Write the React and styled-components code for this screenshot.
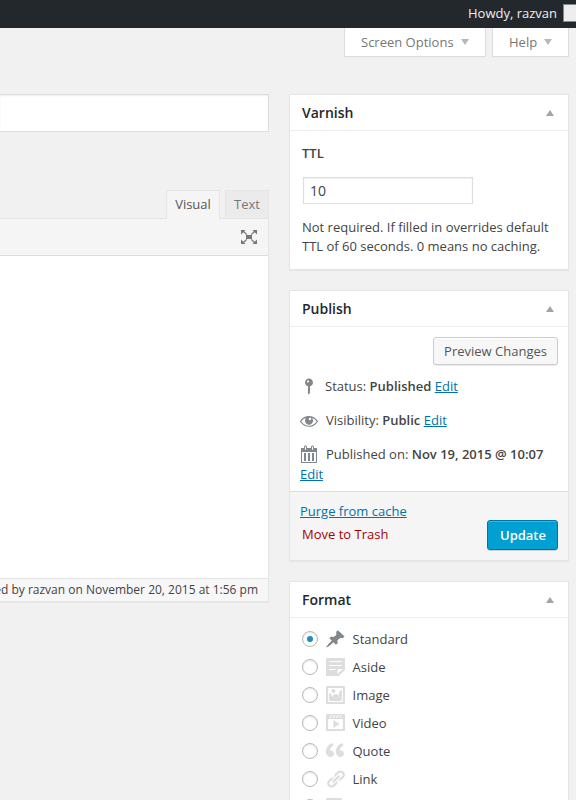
import React from "react";
import styled, { createGlobalStyle, css } from "styled-components";

const GlobalStyle = createGlobalStyle`
  *, *::before, *::after { box-sizing: border-box; }
  html, body { margin: 0; background: #f1f1f1; }
  body {
    font: 13px/19px "Open Sans", sans-serif;
    color: #444;
    overflow: hidden;
  }
`;

const Page = styled.div`
  width: 576px;
  height: 800px;
  overflow: hidden;
  display: flex;
  flex-direction: column;
  background: #f1f1f1;
`;

const AdminBar = styled.header`
  flex: none;
  height: 28px;
  background: #23282d;
  color: #eee;
  display: flex;
  justify-content: flex-end;
  align-items: center;
  line-height: 26px;
  padding-bottom: 3px;
`;

const Avatar = styled.span`
  width: 13px;
  height: 18px;
  margin-left: 6px;
  background: #eee;
  border: 1px solid #82878c;
  border-right: 0;
`;

const ScreenMeta = styled.nav`
  flex: none;
  display: flex;
  justify-content: flex-end;
  gap: 6px;
  padding-right: 7px;
  height: 66px;
`;

const MetaButton = styled.button`
  height: 29px;
  width: ${(p) => p.$width}px;
  padding: 1px 0 0 16px;
  background: #fff;
  border: 1px solid #ddd;
  border-top: 0;
  box-shadow: 0 1px 1px -1px rgba(0, 0, 0, 0.1);
  color: #777;
  font: inherit;
  display: flex;
  align-items: center;
`;

const Arrow = styled.span`
  width: 0;
  height: 0;
  border: solid transparent;
  ${(p) =>
    p.$up
      ? css`border-width: 0 4px 6px; border-bottom-color: #a0a5aa;`
      : css`border-width: 6px 4.5px 0; border-top-color: #b4b9be; margin: 0 0 1px 7px;`}
`;

const Columns = styled.div`
  display: flex;
  gap: 20px;
  flex: 1;
  align-items: flex-start;
`;

const Main = styled.main`
  width: 269px;
  flex: none;
`;

const TitleInput = styled.input`
  display: block;
  width: 100%;
  height: 38px;
  border: 1px solid #ddd;
  border-left: 0;
  background: #fff;
  box-shadow: inset 0 1px 2px rgba(0, 0, 0, 0.07);
  outline: 0;
`;

const Tabs = styled.div`
  display: flex;
  justify-content: flex-end;
  align-items: flex-start;
  gap: 5px;
  height: 28px;
  margin-top: 58px;
`;

const Tab = styled.button`
  height: ${(p) => (p.$active ? 29 : 28)}px;
  width: ${(p) => p.$width}px;
  padding: 0 0 ${(p) => (p.$active ? 1 : 0)}px;
  border: 1px solid #e5e5e5;
  border-bottom: 0;
  background: ${(p) => (p.$active ? "#f5f5f5" : "#ebebeb")};
  color: ${(p) => (p.$active ? "#555" : "#777")};
  font: inherit;
  position: relative;
  z-index: 1;
`;

const Editor = styled.section`
  border: 1px solid #e5e5e5;
  border-left: 0;
  box-shadow: 0 1px 1px rgba(0, 0, 0, 0.04);
  height: 384px;
  background: #fff;
  display: flex;
  flex-direction: column;
`;

const Toolbar = styled.div`
  height: 37px;
  background: #f5f5f5;
  border-bottom: 1px solid #ddd;
  display: flex;
  align-items: center;
  justify-content: flex-end;
  padding-right: 9px;
`;

const EditorStatus = styled.footer`
  height: 23px;
  margin-top: auto;
  background: #f7f7f7;
  border-top: 1px solid #e5e5e5;
  font-size: 12px;
  line-height: 22px;
  padding-right: 10px;
  white-space: nowrap;
  display: flex;
  justify-content: flex-end;
`;

const Sidebar = styled.aside`
  width: 280px;
  flex: none;
`;

const PostBox = styled.section`
  height: ${(p) => p.$height}px;
  margin-bottom: 20px;
  background: #fff;
  border: 1px solid #e5e5e5;
  box-shadow: 0 1px 1px rgba(0, 0, 0, 0.04);
`;

const BoxHeader = styled.header`
  height: 36px;
  padding: 0 14px 0 12px;
  border-bottom: 1px solid #eee;
  display: flex;
  align-items: center;
  justify-content: space-between;
`;

const BoxTitle = styled.h2`
  margin: 0;
  font-size: 14px;
  line-height: 20px;
  font-weight: 600;
  color: #23282d;
`;

const TtlBody = styled.div`
  padding: 13px 12px;
  display: flex;
  flex-direction: column;
`;

const FieldLabel = styled.label`
  font-weight: 600;
`;

const Field = styled.input`
  width: 170px;
  height: 27px;
  margin: 14px 0 14px 1px;
  padding: 0 5px 1px 6px;
  border: 1px solid #ddd;
  box-shadow: inset 0 1px 2px rgba(0, 0, 0, 0.07);
  color: #444;
  font: 14px "Open Sans", sans-serif;
`;

const Hint = styled.p`
  margin: 0;
  white-space: nowrap;
`;

const PublishBody = styled.div`
  height: 164px;
  padding: 10px;
`;

const Button = styled.button`
  display: block;
  margin-left: auto;
  border-radius: 3px;
  font: inherit;
  padding: 0;
  ${(p) =>
    p.$primary
      ? css`
          width: 71px;
          height: 30px;
          padding-left: 1px;
          background: #00a0d2;
          border: 1px solid #0073aa;
          box-shadow: inset 0 1px 0 rgba(120, 200, 230, 0.5), 0 1px 0 rgba(0, 0, 0, 0.15);
          color: #fff;
          font-weight: 600;
        `
      : css`
          width: 125px;
          height: 28px;
          background: #f7f7f7;
          border: 1px solid #ccc;
          box-shadow: inset 0 1px 0 #fff, 0 1px 0 rgba(0, 0, 0, 0.08);
          color: #555;
        `}
`;

const StatusRow = styled.div`
  display: flex;
  align-items: center;
  gap: ${(p) => (p.$first ? 6 : 7)}px;
  height: 20px;
  margin-top: ${(p) => (p.$first ? 11 : 14)}px;
  margin-left: -1px;
  white-space: pre;
  b { font-weight: 600; }
`;

const Link = styled.a`
  color: #0073aa;
  text-decoration: underline;
`;

const DateEdit = styled.div`
  padding-top: 1px;
`;

const PublishFooter = styled.footer`
  height: 69px;
  padding: 10px;
  background: #f5f5f5;
  border-top: 1px solid #ddd;
`;

const ActionRow = styled.div`
  display: flex;
  align-items: center;
  margin-top: -1px;
`;

const TrashLink = styled.a`
  color: #a00;
  padding-left: 2px;
  margin-top: -1px;
`;

const FormatList = styled.div`
  padding: 7px 12px;
`;

const FormatRow = styled.label`
  display: flex;
  align-items: center;
  height: 28px;
`;

const Radio = styled.span`
  width: 16px;
  height: 16px;
  border: 1px solid #b4b9be;
  border-radius: 50%;
  box-shadow: inset 0 1px 2px rgba(0, 0, 0, 0.1);
  background: #fff;
  display: grid;
  place-items: center;
  margin-right: 7px;
  &::after {
    content: "";
    width: 6px;
    height: 6px;
    border-radius: 50%;
    background: ${(p) => (p.$checked ? "#1e8cbe" : "transparent")};
  }
`;

const Glyph = styled.svg`
  width: 20px;
  height: 20px;
  flex: none;
  fill: ${(p) => p.$color || "#82878c"};
`;

const FormatGlyph = styled(Glyph)`
  width: 21px;
  margin-right: 6.5px;
`;

const glyphs = {
  expand: "M7 8h6v4H7zM2 3h4.4L5.2 4.3 8.2 7.3 7.4 8 4.3 5.2 2 7.4zM18 3v4.4L15.7 5.2 12.6 8 11.8 7.3 14.8 4.3 13.6 3zM2 17v-4.4L4.3 14.8 7.4 12 8.2 12.7 5.2 15.7 6.4 17zM18 17h-4.4L14.8 15.7 11.8 12.7 12.6 12 15.7 14.8 18 12.6z",
  postStatus: "M14 6.5c0 1.86-1.28 3.41-3 3.86V16.5c0 1-2 2-2 2v-8.14C7.28 9.91 6 8.36 6 6.5c0-2.21 1.79-4 4-4s4 1.79 4 4zM8 5.5c0 .55.45 1 1 1s1-.45 1-1-.45-1-1-1-1 .45-1 1z",
  visibility: "M18.3 10.3C15 5.7 8.5 4.6 3.9 8c-1.2.9-2.2 2.1-3 3.4.2.4.5.8.8 1.2 3.3 4.6 9.6 5.6 14.2 2.4.9-.7 1.7-1.4 2.4-2.4.3-.4.5-.8.8-1.2-.3-.4-.5-.8-.8-1.1zM10.1 8c.5-.5 1.3-.5 1.8 0s.5 1.3 0 1.8-1.3.5-1.8 0-.5-1.3 0-1.8zm-.1 7.7c-3.1 0-6-1.6-7.7-4.2C3.5 9.8 5.1 8.6 7 8c-.7.8-1 1.7-1 2.7 0 2.2 1.7 4.1 4 4.1 2.2 0 4.1-1.7 4.1-4v-.1c0-1-.4-2-1.1-2.7 1.9.6 3.5 1.8 4.7 3.5-1.7 2.6-4.6 4.2-7.7 4.2z",
  calendar: "M15 4h3v15H2V4h3V3c0-.41.15-.76.44-1.06.29-.29.65-.44 1.06-.44s.77.15 1.06.44c.29.3.44.65.44 1.06v1h4V3c0-.41.15-.76.44-1.06.29-.29.65-.44 1.06-.44s.77.15 1.06.44c.29.3.44.65.44 1.06v1zM6 3v2.5c0 .14.05.26.15.36.09.09.21.14.35.14s.26-.05.35-.14c.1-.1.15-.22.15-.36V3c0-.14-.05-.26-.15-.35-.09-.1-.21-.15-.35-.15s-.26.05-.35.15c-.1.09-.15.21-.15.35zm7 0v2.5c0 .14.05.26.14.36.1.09.22.14.36.14s.26-.05.36-.14c.09-.1.14-.22.14-.36V3c0-.14-.05-.26-.14-.35-.1-.1-.22-.15-.36-.15s-.26.05-.36.15c-.09.09-.14.21-.14.35zm4 15V8H3v10h14zM7 9v8H5V9h2zm4 0v8H9V9h2zm4 0v8h-2V9h2z",
  standard: "M10.44 3.02l1.82-1.82 6.36 6.35-1.83 1.82c-1.05-.68-2.48-.57-3.41.36l-.75.75c-.92.93-1.04 2.35-.35 3.41l-1.83 1.82-2.41-2.41-2.8 2.79c-.42.42-3.38 2.71-3.8 2.29s1.86-3.39 2.28-3.81l2.79-2.79L4.1 9.36l1.83-1.82c1.05.69 2.48.57 3.4-.36l.75-.75c.93-.92 1.05-2.35.36-3.41z",
  aside: "M1 1h18v12l-6 6H1V1zm3 3v1h12V4H4zm0 4v1h12V8H4zm6 5v-1H4v1h6zm2 4l5-5h-5v5z",
  image: "M2.25 1h15.5c.69 0 1.25.56 1.25 1.25v15.5c0 .69-.56 1.25-1.25 1.25H2.25C1.56 19 1 18.44 1 17.75V2.25C1 1.56 1.56 1 2.25 1zM17 17V3H3v14h14zM10 6c0-1.1-.9-2-2-2s-2 .9-2 2 .9 2 2 2 2-.9 2-2zm3 5s0-6 3-6v10c0 .55-.45 1-1 1H5c-.55 0-1-.45-1-1V8c2 0 3 4 3 4s1-3 3-3 3 2 3 2z",
  video: "M2 1h16c.55 0 1 .45 1 1v16l-18-.02V2c0-.55.45-1 1-1zm4 1L4 5h1l2-3H6zm4 0H9L7 5h1zm3 0h-1l-2 3h1zm3 0h-1l-2 3h1zm1 14V6H3v10h14zM8 7l6 4-6 4V7z",
  quote: "M8.54 12.74c0-.87-.24-1.61-.72-2.22-.73-.92-2.14-1.03-2.96-.85-.34-1.93 1.3-4.39 3.42-5.45L6.65 1.94C3.45 3.46.31 6.96.85 11.37 1.19 14.16 2.8 16 5.08 16c1 0 1.83-.29 2.48-.88.66-.59.98-1.38.98-2.38zm9.43 0c0-.87-.24-1.61-.72-2.22-.73-.92-2.14-1.03-2.96-.85-.34-1.93 1.3-4.39 3.42-5.45l-1.63-2.28c-3.2 1.52-6.34 5.02-5.8 9.43.34 2.79 1.95 4.63 4.23 4.63 1 0 1.83-.29 2.48-.88.66-.59.98-1.38.98-2.38z",
  link: "M17.74 2.76c1.68 1.69 1.68 4.41 0 6.1l-1.53 1.52c-1.12 1.12-2.7 1.47-4.14 1.09l2.62-2.61.76-.77.76-.76c.84-.84.84-2.2 0-3.04-.84-.85-2.2-.85-3.04 0l-.77.76-3.38 3.38c-.37-1.44-.02-3.02 1.1-4.14l1.52-1.53c1.69-1.68 4.42-1.68 6.1 0zM8.59 13.43l5.34-5.34c.42-.42.42-1.1 0-1.52-.44-.43-1.13-.39-1.53 0l-5.33 5.34c-.42.42-.42 1.1 0 1.52.44.43 1.13.39 1.52 0zm-.76 2.29l4.14-4.15c.38 1.44.03 3.02-1.09 4.14l-1.52 1.53c-1.69 1.68-4.41 1.68-6.1 0-1.68-1.68-1.68-4.42 0-6.1l1.53-1.52c1.12-1.12 2.7-1.47 4.14-1.1l-4.14 4.15c-.85.84-.85 2.2 0 3.05.84.84 2.2.84 3.04 0z",
  gallery: "M16 4h1.96c.57 0 1.04.47 1.04 1.04v12.92c0 .57-.47 1.04-1.04 1.04H5.04C4.47 19 4 18.53 4 17.96V16H2.04C1.47 16 1 15.53 1 14.96V2.04C1 1.47 1.47 1 2.04 1h12.92c.57 0 1.04.47 1.04 1.04V4zM3 14h11V3H3v11z",
};

const Icon = ({ name, color, as: Component = Glyph, stretch }) => (
  <Component
    viewBox="0 0 20 20"
    preserveAspectRatio={stretch ? "none" : undefined}
    $color={color}
    fillRule="evenodd"
    aria-hidden="true"
  >
    <path d={glyphs[name]} />
  </Component>
);

const formats = [
  ["standard", "Standard"],
  ["aside", "Aside"],
  ["image", "Image"],
  ["video", "Video"],
  ["quote", "Quote"],
  ["link", "Link"],
  ["gallery", "Gallery"],
];

const Box = ({ title, height, children }) => (
  <PostBox $height={height}>
    <BoxHeader>
      <BoxTitle>{title}</BoxTitle>
      <Arrow $up />
    </BoxHeader>
    {children}
  </PostBox>
);

export default function App() {
  return (
    <Page>
      <GlobalStyle />
      <AdminBar>
        <span>Howdy, razvan</span>
        <Avatar />
      </AdminBar>
      <ScreenMeta>
        <MetaButton $width={142}>Screen Options<Arrow /></MetaButton>
        <MetaButton $width={77}>Help<Arrow /></MetaButton>
      </ScreenMeta>
      <Columns>
        <Main>
          <TitleInput aria-label="Title" />
          <Tabs>
            <Tab $active $width={54}>Visual</Tab>
            <Tab $width={44}>Text</Tab>
          </Tabs>
          <Editor>
            <Toolbar><Icon name="expand" color="#777" /></Toolbar>
            <EditorStatus>Last edited by razvan on November 20, 2015 at 1:56 pm</EditorStatus>
          </Editor>
        </Main>
        <Sidebar>
          <Box title="Varnish" height={176}>
            <TtlBody>
              <FieldLabel htmlFor="ttl">TTL</FieldLabel>
              <Field id="ttl" defaultValue="10" />
              <Hint>
                Not required. If filled in overrides default<br />
                TTL of 60 seconds. 0 means no caching.
              </Hint>
            </TtlBody>
          </Box>
          <Box title="Publish" height={271}>
            <PublishBody>
              <Button>Preview Changes</Button>
              <StatusRow $first>
                <Icon name="postStatus" />
                <span>Status: <b>Published</b> <Link>Edit</Link></span>
              </StatusRow>
              <StatusRow>
                <Icon name="visibility" />
                <span>Visibility: <b>Public</b> <Link>Edit</Link></span>
              </StatusRow>
              <StatusRow>
                <Icon name="calendar" />
                <span>Published on: <b>Nov 19, 2015 @ 10:07</b></span>
              </StatusRow>
              <DateEdit><Link>Edit</Link></DateEdit>
            </PublishBody>
            <PublishFooter>
              <Link>Purge from cache</Link>
              <ActionRow>
                <TrashLink>Move to Trash</TrashLink>
                <Button $primary>Update</Button>
              </ActionRow>
            </PublishFooter>
          </Box>
          <Box title="Format" height={260}>
            <FormatList>
              {formats.map(([name, label], i) => (
                <FormatRow key={name}>
                  <Radio $checked={i === 0} />
                  <Icon as={FormatGlyph} stretch name={name} color={i === 0 ? "#82878c" : "#ddd"} />
                  {label}
                </FormatRow>
              ))}
            </FormatList>
          </Box>
        </Sidebar>
      </Columns>
    </Page>
  );
}
